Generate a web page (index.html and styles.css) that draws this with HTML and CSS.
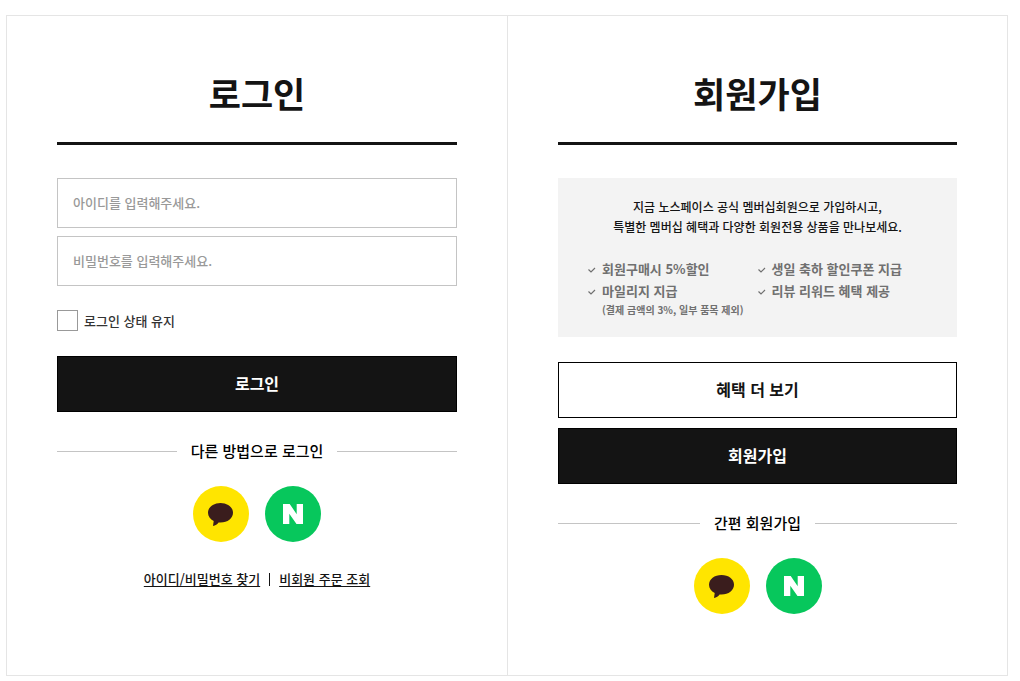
FILE: index.html
```html
<!DOCTYPE html>
<html lang="ko">
<head>
  <meta charset="utf-8">
  <meta name="viewport" content="width=device-width, initial-scale=1">
  <title>로그인 / 회원가입</title>
  <link rel="stylesheet" href="styles.css">
</head>
<body>
  <svg class="symbols" aria-hidden="true">
    <symbol id="talk" viewBox="0 0 56 56">
      <path d="M27.500 17C34.500 17 40 21.200 40 26.700S34.500 36.500 27.500 36.500C26.900 36.500 26.200 36.500 25.600 36.400C24.400 38.200 22.400 39.300 20 40L20.700 35C17.200 33.300 15 30.200 15 26.700C15 21.200 20.500 17 27.500 17Z" fill="#3a1d1d"/>
    </symbol>
    <symbol id="naver" viewBox="0 0 56 56">
      <path d="M18 18h6.700l7 10.200V18H38v20h-6.500l-7.200-10.300V38H18z" fill="#fff"/>
    </symbol>
    <symbol id="check" viewBox="0 0 8 8">
      <path d="M0.500 3.500l2.500 2.500L7 2" fill="none" stroke="#707070" stroke-width="1.200"/>
    </symbol>
  </svg>

  <main class="panels">
    <section class="panel">
      <h2 class="title">로그인</h2>
      <form>
        <div class="fields">
          <input class="field" type="text" aria-label="아이디" placeholder="아이디를 입력해주세요.">
          <input class="field" type="password" aria-label="비밀번호" placeholder="비밀번호를 입력해주세요.">
        </div>
        <label class="keep"><input class="keep-box" type="checkbox">로그인 상태 유지</label>
        <button class="button button-dark" type="submit">로그인</button>
      </form>
      <h3 class="divider">다른 방법으로 로그인</h3>
      <div class="socials">
        <button class="social social-talk" type="button" aria-label="카카오 로그인"><svg><use href="#talk"/></svg></button>
        <button class="social social-naver" type="button" aria-label="네이버 로그인"><svg><use href="#naver"/></svg></button>
      </div>
      <nav class="links">
        <a href="#find">아이디/비밀번호 찾기</a>
        <span class="bar"></span>
        <a href="#order">비회원 주문 조회</a>
      </nav>
    </section>

    <section class="panel">
      <h2 class="title">회원가입</h2>
      <div class="info">
        <p class="info-text">지금 노스페이스 공식 멤버십회원으로 가입하시고,<br>특별한 멤버십 혜택과 다양한 회원전용 상품을 만나보세요.</p>
        <ul class="benefits">
          <li><svg><use href="#check"/></svg><span>회원구매시 5%할인</span></li>
          <li><svg><use href="#check"/></svg><span>생일 축하 할인쿠폰 지급</span></li>
          <li><svg><use href="#check"/></svg><span>마일리지 지급<small>(결제 금액의 3%, 일부 품목 제외)</small></span></li>
          <li><svg><use href="#check"/></svg><span>리뷰 리워드 혜택 제공</span></li>
        </ul>
      </div>
      <div class="actions">
        <button class="button" type="button">혜택 더 보기</button>
        <button class="button button-dark" type="button">회원가입</button>
      </div>
      <h3 class="divider">간편 회원가입</h3>
      <div class="socials">
        <button class="social social-talk" type="button" aria-label="카카오 회원가입"><svg><use href="#talk"/></svg></button>
        <button class="social social-naver" type="button" aria-label="네이버 회원가입"><svg><use href="#naver"/></svg></button>
      </div>
    </section>
  </main>
</body>
</html>
```
FILE: styles.css
```css
* {
  box-sizing: border-box;
}

body {
  margin: 0;
  padding: 15px 12px 5px 6px;
  background: #fff;
  color: #141414;
  font-family: "Noto Sans CJK KR", "Noto Sans", sans-serif;
  font-size: 13px;
  font-weight: 500;
}

.symbols {
  display: none;
}

button,
input {
  font: inherit;
  color: inherit;
}

.panels {
  display: grid;
  grid-template-columns: 1fr 1fr;
  border: 1px solid #e5e5e5;
}

.panel {
  padding: 53px 50px 61px;
}

.panel + .panel {
  border-left: 1px solid #e5e5e5;
}

.title {
  margin: 0 0 33px;
  padding-bottom: 25px;
  border-bottom: 3px solid #141414;
  font-size: 35px;
  font-weight: 700;
  line-height: 48px;
  text-align: center;
}

.fields {
  display: grid;
  gap: 8px;
}

.field {
  width: 100%;
  height: 50px;
  padding: 0 15px 2px;
  border: 1px solid #c4c4c4;
  border-radius: 0;
  background: #fff;
}

.field::placeholder {
  color: #999;
  opacity: 1;
}

.keep {
  display: flex;
  align-items: center;
  gap: 6px;
  margin: 24px 0 25px;
  color: #333;
  line-height: 20px;
}

.keep-box {
  appearance: none;
  width: 21px;
  height: 21px;
  margin: 0;
  border: 1px solid #999;
  background: #fff;
}

.keep-box:checked {
  background: #141414;
}

.button {
  display: block;
  width: 100%;
  height: 56px;
  padding: 0 0 2px;
  border: 1px solid #000;
  background: #fff;
  font-size: 16px;
  font-weight: 700;
  cursor: pointer;
}

.button-dark {
  background: #141414;
  color: #fff;
}

.actions {
  display: grid;
  gap: 10px;
  margin-top: 25px;
}

.divider {
  display: flex;
  align-items: center;
  gap: 14px;
  margin: 28px 0 24px;
  color: #000;
  font-size: 15px;
  font-weight: 500;
  line-height: 22px;
}

.divider::before,
.divider::after {
  content: "";
  flex: 1;
  height: 1px;
  background: #c4c4c4;
}

.socials {
  display: flex;
  justify-content: center;
  gap: 16px;
}

.social {
  width: 56px;
  height: 56px;
  padding: 0;
  border: 0;
  border-radius: 50%;
  cursor: pointer;
}

.social svg {
  display: block;
  width: 56px;
  height: 56px;
}

.social-talk {
  background: #ffe500;
}

.social-naver {
  background: #07c75c;
}

.links {
  display: flex;
  justify-content: center;
  align-items: center;
  gap: 9px;
  margin-top: 27px;
  line-height: 20px;
}

.links a {
  color: inherit;
  text-underline-offset: 2px;
}

.bar {
  width: 1px;
  height: 13px;
  background: #141414;
}

.info {
  padding: 19px 30px;
  background: #f3f3f3;
}

.info-text {
  margin: 0 -15px 21px;
  font-size: 12px;
  line-height: 20px;
  text-align: center;
}

.benefits {
  display: grid;
  grid-template-columns: 1fr 1fr;
  margin: 0;
  padding: 0;
  color: #707070;
  font-size: 13px;
  font-weight: 700;
  line-height: 22px;
  list-style: none;
  white-space: nowrap;
}

.benefits li {
  display: flex;
  gap: 6px;
}

.benefits svg {
  flex: none;
  width: 8px;
  height: 8px;
  margin-top: 8px;
}

.benefits small {
  display: block;
  font-size: 10px;
  line-height: 16px;
}
```
